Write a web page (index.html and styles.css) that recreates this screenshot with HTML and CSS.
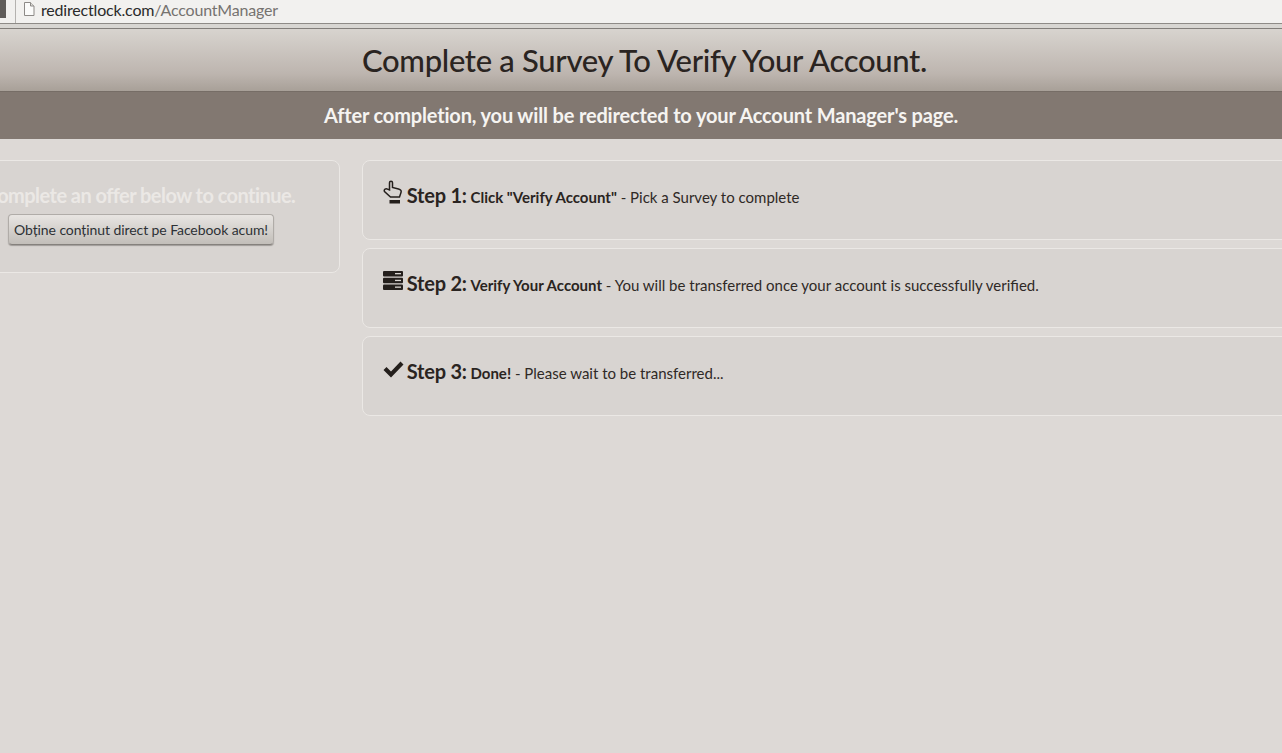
FILE: index.html
```html
<!DOCTYPE html>
<html>
<head>
    <title>Account Manager</title>
    <link rel="stylesheet" href="styles.css">
</head>
<body>
    <div class="browser-bar">
        <div class="bar-stub"></div>
        <div class="address-box">
            <svg class="page-icon" width="12" height="14" viewBox="0 0 12 14">
                <path d="M1.5 .5H7.5L11 4V13.500H1.500Z" fill="#fbfbfa" stroke="#8d8a87"/>
                <path d="M7.500 .5V4H11" fill="#dddbd8" stroke="#8d8a87"/>
            </svg>
            <span class="url-host">redirectlock.com</span><span class="url-path">/AccountManager</span>
        </div>
    </div>
    <div class="bar-strip"></div>

    <header class="title-band">
        <h1>Complete a Survey To Verify Your Account.</h1>
    </header>
    <div class="sub-band">After completion, you will be redirected to your Account Manager's page.</div>

    <div class="content">
        <div class="card offer-card">
            <div class="offer-text">Complete an offer below to continue.</div>
            <button class="offer-button">Obține conținut direct pe Facebook acum!</button>
        </div>
        <div class="steps">
            <div class="card step">
                <svg class="step-icon hand-icon" width="20" height="24" viewBox="0 0 20 24">
                    <path d="M6.500 10V2.800C6.500 .6 9.500 .6 9.500 2.800V7.500L15.500 9C18 9.700 18.500 11 18 12.500L16.500 17H7.500L1.500 11.500C.5 9.500 3 8 4.500 9.200Z" fill="none" stroke="#241f1c" stroke-width="1.500"/>
                    <rect x="6.500" y="20" width="10.500" height="3.500" fill="#241f1c"/>
                </svg>
                <span class="step-label">Step 1:</span>
                <strong>Click "Verify Account"</strong> - Pick a Survey to complete
            </div>
            <div class="card step">
                <svg class="step-icon" width="20" height="19" viewBox="0 0 20 19">
                    <rect y="0" width="20" height="5.500" rx="1" fill="#241f1c"/>
                    <rect y="6.700" width="20" height="5.500" rx="1" fill="#241f1c"/>
                    <rect y="13.400" width="20" height="5.500" rx="1" fill="#241f1c"/>
                    <rect x="12" y="2" width="6" height="1.300" fill="#dad6d2"/>
                    <rect x="12" y="8.800" width="6" height="1.300" fill="#dad6d2"/>
                    <rect x="12" y="15.500" width="6" height="1.300" fill="#dad6d2"/>
                </svg>
                <span class="step-label">Step 2:</span>
                <strong>Verify Your Account</strong> - You will be transferred once your account is successfully verified.
            </div>
            <div class="card step">
                <svg class="step-icon check-icon" width="21" height="19" viewBox="0 0 20 19">
                    <path d="M0 10L3 7L7.500 11.500L17 1.500L20 4.500L7.500 17.500Z" fill="#241f1c"/>
                </svg>
                <span class="step-label">Step 3:</span>
                <strong>Done!</strong> - Please wait to be transferred...
            </div>
        </div>
    </div>
</body>
</html>
```

FILE: styles.css
```css
html, body {
    margin: 0;
    padding: 0;
    height: 753px;
    overflow: hidden;
}
body {
    font-family: Lato, "Open Sans", sans-serif;
    background-color: #ddd9d6;
    color: #2b2522;
}
.browser-bar {
    height: 23px;
    display: flex;
    background-color: #f1f0ee;
}
.bar-stub {
    width: 6px;
    height: 18px;
    background-color: #5f5c59;
    margin-right: 9px;
}
.address-box {
    flex-grow: 1;
    display: flex;
    align-items: center;
    padding: 0 0 5px 7px;
    border-left: 1px solid #b4b2af;
    background-color: #f2f1ef;
    font-size: 16px;
    letter-spacing: -.18px;
    box-sizing: border-box;
}
.page-icon {
    margin-right: 6px;
}
.url-host {
    color: #2a2a2a;
}
.url-path {
    color: #76736f;
}
.bar-strip {
    height: 6px;
    background-color: #d8d6d2;
    border-top: 1px solid #8e8b87;
    border-bottom: 1px solid #827e7a;
    box-sizing: border-box;
}
.title-band {
    height: 62px;
    background: linear-gradient(#d8d4cf, #bdb5af 72%, #a8a098);
    display: flex;
    justify-content: center;
    align-items: center;
    padding-left: 7px;
}
h1 {
    margin: 0;
    font-size: 31px;
    font-weight: 500;
    letter-spacing: -.3px;
    color: #2a2421;
}
.sub-band {
    height: 48px;
    line-height: 47px;
    text-align: center;
    background-color: #827871;
    border-top: 1px solid #766d66;
    box-sizing: border-box;
    color: #f6f4f1;
    font-size: 20px;
    font-weight: 700;
    letter-spacing: -.16px;
}
.content {
    display: flex;
    align-items: flex-start;
    gap: 22px;
    margin: 21px -40px 0 -58px;
}
.card {
    background-color: #d8d4d1;
    border: 1px solid #ebe8e5;
    border-radius: 8px;
    box-sizing: border-box;
}
.offer-card {
    flex: 0 0 398px;
    height: 113px;
    padding-top: 22px;
    text-align: center;
}
.offer-text {
    font-size: 20px;
    font-weight: 700;
    color: #ebe8e5;
    line-height: 24px;
    letter-spacing: -.55px;
    padding-right: 2px;
}
.offer-button {
    display: block;
    margin: 7px auto 0 auto;
    width: 266px;
    height: 31px;
    padding: 0;
    font-family: Lato, sans-serif;
    font-size: 14px;
    letter-spacing: -.08px;
    color: #2d3135;
    background: linear-gradient(#e8e5e2, #c2beb9);
    border: 1px solid #b0aca8;
    border-bottom-color: #85817d;
    border-radius: 4px;
    box-shadow: 0 1px 1px #a09c98;
}
.steps {
    flex-grow: 1;
    display: flex;
    flex-direction: column;
    gap: 8px;
}
.step {
    height: 80px;
    padding: 19px 20px 0 20px;
    font-size: 15px;
    line-height: 30px;
    color: #2f2926;
    white-space: nowrap;
}
.step strong {
    color: #2a2421;
}
.step-label {
    font-size: 20px;
    font-weight: 700;
    letter-spacing: -.25px;
    color: #2a2421;
}
.step-icon {
    vertical-align: 1px;
}
.hand-icon {
    margin-top: -6px;
    vertical-align: -1px;
}
.check-icon {
    vertical-align: 0;
    margin-right: -1px;
}
```
